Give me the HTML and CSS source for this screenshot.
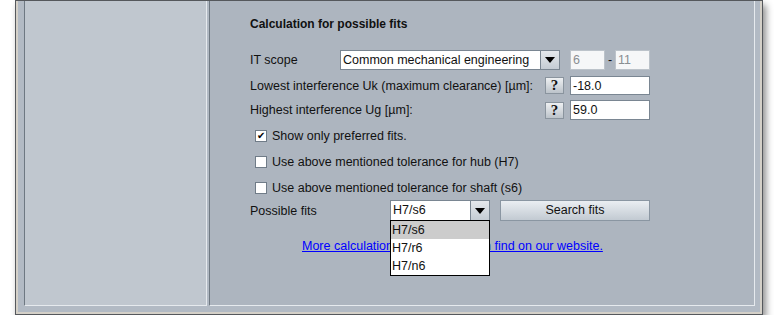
FILE: index.html
```html
<!DOCTYPE html>
<html lang="en">
<head>
    <meta charset="UTF-8">
    <title>Calculation for possible fits</title>
    <link rel="stylesheet" href="styles.css">
</head>
<body>
    <div class="window">
        <div class="window-inner">
            <div class="content">
                <div class="panel side-panel"></div>
                <div class="panel main-panel">
                    <div class="form">
                        <div class="title">Calculation for possible fits</div>

                        <div class="row row-scope">
                            <span class="label label-short">IT scope</span>
                            <div class="combo combo-wide">
                                <span class="combo-value">Common mechanical engineering</span>
                                <span class="combo-arrow"><span class="tri"></span></span>
                            </div>
                            <span class="field field-small field-from disabled">6</span>
                            <span class="dash">-</span>
                            <span class="field field-small disabled">11</span>
                        </div>

                        <div class="row row-uk">
                            <span class="label label-long">Lowest interference Uk (maximum clearance) [µm]:</span>
                            <span class="help">?</span>
                            <span class="field field-value">-18.0</span>
                        </div>

                        <div class="row row-ug">
                            <span class="label label-long">Highest interference Ug [µm]:</span>
                            <span class="help">?</span>
                            <span class="field field-value">59.0</span>
                        </div>

                        <div class="row check-row">
                            <span class="checkbox">&#10004;</span>
                            <span class="check-text">Show only preferred fits.</span>
                        </div>
                        <div class="row check-row">
                            <span class="checkbox"></span>
                            <span class="check-text">Use above mentioned tolerance for hub (H7)</span>
                        </div>
                        <div class="row check-row">
                            <span class="checkbox"></span>
                            <span class="check-text">Use above mentioned tolerance for shaft (s6)</span>
                        </div>

                        <div class="row row-fits">
                            <span class="label label-fits">Possible fits</span>
                            <div class="combo combo-fits">
                                <span class="combo-value">H7/s6</span>
                                <span class="combo-arrow"><span class="tri"></span></span>
                                <ul class="dropdown">
                                    <li class="selected">H7/s6</li>
                                    <li>H7/r6</li>
                                    <li>H7/n6</li>
                                </ul>
                            </div>
                            <span class="button">Search fits</span>
                        </div>

                        <div class="link-row">
                            <a href="#" class="link">More calculation modules you can find on our website.</a>
                        </div>
                    </div>
                </div>
            </div>
        </div>
    </div>
</body>
</html>
```

FILE: styles.css
```css
body {
    margin: 0;
    background: #ffffff;
    font-family: "Liberation Sans", Arial, sans-serif;
    font-size: 12.5px;
    color: #111;
}
.window {
    margin-left: 15px;
    width: 746px;
    height: 313px;
    border: 1px solid #55585c;
    box-shadow: 3px 5px 7px rgba(0,0,0,0.45);
}
.window-inner {
    height: 313px;
    box-sizing: border-box;
    border: 2px solid #d4d0c8;
    border-top: none;
    background: #b2bac4;
}
.content {
    display: flex;
    gap: 2px;
    padding: 0 5px 4px 6px;
    height: 311px;
    box-sizing: border-box;
}
.panel {
    height: 305px;
    box-sizing: border-box;
    border-left: 1px solid #6e7882;
    border-right: 1px solid #e6eaee;
    border-bottom: 1px solid #e6eaee;
}
.side-panel {
    width: 183px;
    background: #c0c7cf;
}
.main-panel {
    width: 546px;
    background: #adb5bf;
}
.form {
    padding-left: 40px;
}
.title {
    font-weight: bold;
    font-size: 12px;
    height: 16px;
    line-height: 16px;
    margin-top: 15px;
}
.row {
    display: flex;
    align-items: center;
}
.row-scope { height: 20px; margin-top: 18px; }
.row-uk { height: 19px; margin-top: 6px; }
.row-ug { height: 20px; margin-top: 5px; }
.check-row { height: 20px; margin-top: 6px; padding-left: 5px; }
.row-fits { height: 21px; margin-top: 2px; }

.label-short { width: 90px; }
.label-long { width: 295px; }
.label-fits { width: 140px; }

.combo {
    position: relative;
    display: flex;
    height: 100%;
    box-sizing: border-box;
    border: 1px solid #7a8692;
    background: #fff;
}
.combo-wide { width: 220px; }
.combo-fits { width: 100px; }
.combo-value {
    flex: 1;
    padding-left: 2px;
    line-height: 18px;
}
.combo-fits .combo-value { line-height: 19px; }
.combo-arrow {
    width: 18px;
    border-left: 1px solid #7a8692;
    background: linear-gradient(#e4e8ec, #c4ccd4);
    display: flex;
    align-items: center;
    justify-content: center;
}
.tri {
    width: 0;
    height: 0;
    border-left: 5px solid transparent;
    border-right: 5px solid transparent;
    border-top: 6px solid #000;
}
.dropdown {
    position: absolute;
    top: 100%;
    left: -1px;
    width: 100px;
    height: 56px;
    box-sizing: border-box;
    margin: 0;
    padding: 0;
    list-style: none;
    border: 1px solid #000;
    background: #fff;
    z-index: 2;
}
.dropdown li {
    height: 18px;
    line-height: 18px;
    padding-left: 1px;
}
.dropdown li.selected { background: #cccccc; }

.field {
    height: 100%;
    box-sizing: border-box;
    border: 1px solid #7a8692;
    background: #fff;
    padding-left: 2px;
    display: flex;
    align-items: center;
}
.field-small { width: 35px; }
.field-from { margin-left: 10px; }
.field.disabled {
    border-color: #bcc3ca;
    background: #f6f7f8;
    color: #8a8e92;
}
.dash {
    width: 10px;
    text-align: center;
}
.field-value {
    width: 80px;
    margin-left: 6px;
}
.help {
    width: 19px;
    height: 17px;
    box-sizing: border-box;
    border: 1px solid #8a949e;
    background: linear-gradient(#eef0f2, #bcc3ca);
    font-family: "Liberation Serif", serif;
    font-weight: bold;
    font-size: 15px;
    line-height: 15px;
    text-align: center;
}

.checkbox {
    width: 12px;
    height: 12px;
    box-sizing: border-box;
    border: 1px solid #707c88;
    background: #fff;
    font-size: 10px;
    line-height: 10px;
    text-align: center;
    color: #000;
}
.check-text { margin-left: 5px; }
.button {
    width: 150px;
    height: 100%;
    box-sizing: border-box;
    margin-left: 10px;
    border: 1px solid #8a96a2;
    background: linear-gradient(#eaeef2, #c2cad2);
    text-align: center;
    line-height: 19px;
}
.link-row {
    margin-top: 15px;
    height: 20px;
    line-height: 20px;
    padding-left: 52px;
}
.link { color: #0000ff; }
```
